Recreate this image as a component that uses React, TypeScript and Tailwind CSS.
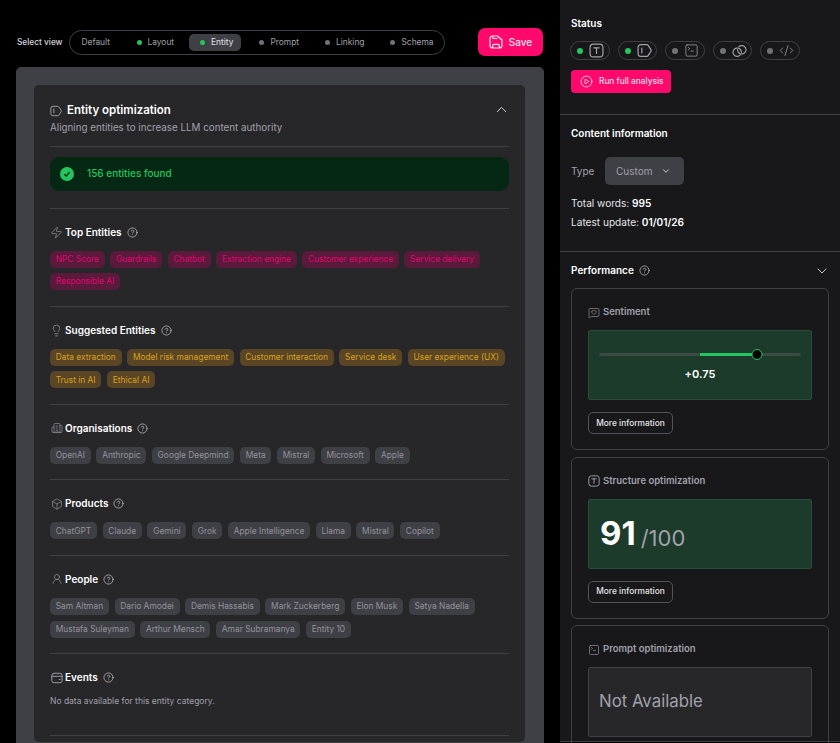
import {
  Box,
  Building2,
  ChevronDown,
  ChevronUp,
  CircleHelp,
  CirclePlay,
  CodeXml,
  Lightbulb,
  MessageSquareHeart,
  SquareTerminal,
  UserRound,
  Zap,
} from "lucide-react";
import type { ReactNode } from "react";

const tabs = [
  { label: "Layout", dot: "bg-[#22c55e]" },
  { label: "Entity", dot: "bg-[#22c55e]", active: true },
  { label: "Prompt", dot: "bg-[#71717a]" },
  { label: "Linking", dot: "bg-[#71717a]" },
  { label: "Schema", dot: "bg-[#71717a]" },
];

const groups = [
  {
    title: "Top Entities",
    icon: <Zap size={13} strokeWidth={1.2} />,
    tone: "bg-[#591a3b] text-[#e0056f]",
    tags: ["NPC Score", "Guardrails", "Chatbot", "Extraction engine", "Customer experience", "Service delivery", "Responsible AI"],
  },
  {
    title: "Suggested Entities",
    icon: <Lightbulb size={13} strokeWidth={1.2} />,
    tone: "bg-[#5a4525] text-[#d8a21c]",
    tags: ["Data extraction", "Model risk management", "Customer interaction", "Service desk", "User experience (UX)", "Trust in AI", "Ethical AI"],
  },
  {
    title: "Organisations",
    icon: <Building2 size={12} strokeWidth={1.2} />,
    tone: "bg-[#3f3f46] text-[#93939b]",
    tags: ["OpenAI", "Anthropic", "Google Deepmind", "Meta", "Mistral", "Microsoft", "Apple"],
  },
  {
    title: "Products",
    icon: <Box size={12} strokeWidth={1.2} />,
    tone: "bg-[#3f3f46] text-[#93939b]",
    tags: ["ChatGPT", "Claude", "Gemini", "Grok", "Apple Intelligence", "Llama", "Mistral", "Copilot"],
  },
  {
    title: "People",
    icon: <UserRound size={12} strokeWidth={1.2} />,
    tone: "bg-[#3f3f46] text-[#93939b]",
    tags: ["Sam Altman", "Dario Amodei", "Demis Hassabis", "Mark Zuckerberg", "Elon Musk", "Satya Nadella", "Mustafa Suleyman", "Arthur Mensch", "Amar Subramanya", "Entity 10"],
  },
];

function TypeIcon({ size = 15 }: { size?: number }) {
  return (
    <svg width={size} height={size} viewBox="0 0 14 14" fill="none" stroke="currentColor" strokeWidth="1.1">
      <rect x="1" y="1" width="12" height="12" rx="3" />
      <path d="M4.5 4.5h5M7 4.500v5.200" strokeLinecap="round" />
    </svg>
  );
}

function EntityIcon({ size = 15 }: { size?: number }) {
  return (
    <svg width={size} height={size} viewBox="0 0 14 14" fill="none" stroke="currentColor" strokeWidth="1.1">
      <path d="M3.5 1.500h5.700c.4 0 .8.200 1 .500l2.800 4.200c.3.500.3 1.100 0 1.600l-2.800 4.200c-.2.300-.6.500-1 .500H3.500A2.500 2.500 0 0 1 1 10V4a2.500 2.500 0 0 1 2.500-2.500Z" strokeLinejoin="round" />
      <path d="M4.500 4.700v4.600" strokeLinecap="round" />
    </svg>
  );
}

function LinkIcon() {
  return (
    <svg width="15" height="14" viewBox="0 0 15 14" fill="none" stroke="currentColor" strokeWidth="1.1">
      <path d="M6.79 2.87A4.2 4.2 0 1 1 5.61 5.49" strokeLinecap="round" />
      <path d="M8.21 11.13A4.2 4.2 0 1 1 9.39 8.51" strokeLinecap="round" />
    </svg>
  );
}

function SaveIcon() {
  return (
    <svg width="14" height="14" viewBox="0 0 14 14" fill="none" stroke="currentColor" strokeWidth="1.2">
      <path d="M3.500 1h5L13 5v5.500a2.500 2.500 0 0 1-2.500 2.500h-7A2.500 2.500 0 0 1 1 10.500v-7A2.500 2.500 0 0 1 3.500 1Z" strokeLinejoin="round" />
      <path d="M4 1.300v2.200h4.500M3.700 13v-2.200a1.500 1.500 0 0 1 1.500-1.500h3.600a1.500 1.500 0 0 1 1.500 1.500V13" strokeLinejoin="round" />
    </svg>
  );
}

function EventsIcon() {
  return (
    <svg width="12" height="12" viewBox="0 0 14 14" fill="none" stroke="currentColor" strokeWidth="1.1">
      <rect x="1" y="1.500" width="12" height="11" rx="2.500" />
      <path d="M1 5h12M9.500 8.800h1.200" strokeLinecap="round" />
    </svg>
  );
}

function Group({ title, icon, children, last }: { title: string; icon: ReactNode; children: ReactNode; last?: boolean }) {
  return (
    <section className={`border-t border-[#3f3f46] pt-[15.500px] ${last ? "h-[82px]" : "pb-[15.500px]"}`}>
      <div className="mb-[10.500px] flex h-4 items-center">
        <span className="mr-[2px] flex w-[13px] justify-center text-[#a1a1aa]">{icon}</span>
        <h3 className="text-[10px] font-semibold text-white">{title}</h3>
        <CircleHelp size={11} strokeWidth={1.3} className="ml-[5px] text-[#e4e4e7]" />
      </div>
      {children}
    </section>
  );
}

function MetricCard({ title, icon, children, more = true }: { title: string; icon: ReactNode; children: ReactNode; more?: boolean }) {
  return (
    <div className={`rounded-[6px] border border-[#3f3f46] px-4 pt-[15.500px] ${more ? "h-[162px]" : "h-[140px]"}`}>
      <div className="mb-[9.500px] flex h-4 items-center gap-[3px] text-[#a1a1aa]">
        {icon}
        <h4 className="text-[9.500px] font-semibold">{title}</h4>
      </div>
      {children}
      {more && (
        <button className="mt-[12px] h-[22px] w-[85px] rounded-[5px] border border-[#52525b] text-[8.400px] font-medium text-[#e4e4e7]">
          More information
        </button>
      )}
    </div>
  );
}

export default function App() {
  return (
    <div className="flex h-[743px] w-[840px] overflow-hidden bg-black font-[Inter,sans-serif]">
      <main className="flex h-full w-[560px] shrink-0 flex-col pl-4 pr-4">
        <div className="flex h-[67px] shrink-0 items-start pt-[28px]">
          <span className="mt-[8px] w-[52.500px] shrink-0 pl-[1px] text-[8.300px] font-medium text-[#d4d4d8]">Select view</span>
          <nav className="mt-[2px] flex h-[25px] w-[376px] items-center gap-[6.500px] rounded-full border border-[#3f3f46] pl-[2px]">
            <span className="w-[47px] shrink-0 pl-[10px] text-[8.400px] text-[#a1a1aa]">Default</span>
            {tabs.map((t) => (
              <span
                key={t.label}
                className={`flex h-[17.500px] shrink-0 items-center gap-[6px] rounded-[5px] pl-[11.500px] pr-2 text-[8.400px] ${t.active ? "bg-[#3f3f46] text-[#e4e4e7]" : "text-[#a1a1aa]"}`}
              >
                <i className={`h-[5px] w-[5px] rounded-full ${t.dot}`} />
                {t.label}
              </span>
            ))}
          </nav>
          <button className="ml-[33.500px] flex h-[28px] w-[65px] items-center justify-center gap-[6px] rounded-[7px] bg-[#ff0a6c] text-[10px] font-medium text-[#ffe4ee]">
            <SaveIcon />
            Save
          </button>
        </div>

        <div className="flex-1 rounded-t-[5px] bg-[#3f3f46] pl-[18px] pr-[19px] pt-[18px]">
          <div className="h-[657px] rounded-[5px] bg-[#27272a] px-4">
            <header className="flex h-[60.500px] items-start justify-between pt-4">
              <div>
                <div className="flex h-[18px] items-center gap-[5px] pt-[1px]">
                  <span className="text-[#a1a1aa]">
                    <EntityIcon size={12} />
                  </span>
                  <h2 className="text-[11.500px] font-semibold text-white">Entity optimization</h2>
                </div>
                <p className="mt-[2px] text-[9.800px] text-[#a1a1aa]">Aligning entities to increase LLM content authority</p>
              </div>
              <ChevronUp size={17} strokeWidth={1.3} className="mr-[-1px] mt-0 text-[#e4e4e7]" />
            </header>

            <div className="border-t border-[#3f3f46] pb-[17px] pt-[10px]">
              <div className="flex h-[34px] items-center gap-[13px] rounded-[9px] bg-[#052814] pl-[10px]">
                <span className="flex h-[14px] w-[14px] items-center justify-center rounded-full bg-[#22c55e]">
                  <svg width="8" height="8" viewBox="0 0 8 8" fill="none" stroke="#052814" strokeWidth="1.300">
                    <path d="M1.300 4.200 3.200 6l3.500-4" />
                  </svg>
                </span>
                <span className="text-[10px] font-medium text-[#22c55e]">156 entities found</span>
              </div>
            </div>

            {groups.map((g) => (
              <Group key={g.title} title={g.title} icon={g.icon}>
                <ul className="flex flex-wrap gap-[5.700px]">
                  {g.tags.map((tag) => (
                    <li key={tag} className={`flex h-[17px] items-center rounded-[5px] px-[5.700px] text-[8.400px] ${g.tone}`}>
                      {tag}
                    </li>
                  ))}
                </ul>
              </Group>
            ))}

            <Group title="Events" icon={<EventsIcon />} last>
              <p className="mt-[-1px] text-[8.500px] text-[#a1a1aa]">No data available for this entity category.</p>
            </Group>
            <div className="border-t border-[#3f3f46]" />
          </div>
        </div>
      </main>

      <aside className="h-[742px] w-[280px] shrink-0 border-b border-[#3f3f46] bg-[#18181b] text-[#e4e4e7]">
        <section className="h-[115px] border-b border-[#3f3f46] px-[11px] pt-[17px]">
          <h3 className="text-[10px] font-semibold leading-3 text-white">Status</h3>
          <div className="ml-[-1px] mt-[12px] flex gap-[8px]">
            {[
              { dot: "bg-[#22c55e]", icon: <TypeIcon /> },
              { dot: "bg-[#22c55e]", icon: <EntityIcon /> },
              { dot: "bg-[#71717a]", icon: <SquareTerminal size={15} strokeWidth={1.2} /> },
              { dot: "bg-[#71717a]", icon: <LinkIcon /> },
              { dot: "bg-[#71717a]", icon: <CodeXml size={15} strokeWidth={1.2} /> },
            ].map((s, i) => (
              <span key={i} className="flex h-[19px] w-[39.500px] items-center gap-[6px] rounded-full border border-[#3f3f46] pl-[6px] text-[#a1a1aa]">
                <i className={`h-[6px] w-[6px] shrink-0 rounded-full ${s.dot}`} />
                {s.icon}
              </span>
            ))}
          </div>
          <button className="mt-[10px] flex h-[22.500px] w-[100px] items-center gap-[6px] rounded-[4px] bg-[#ff0a6c] pl-[9px] text-[8.300px] font-medium text-[#ffd9e8]">
            <CirclePlay size={13} strokeWidth={1.3} className="text-white" />
            Run full analysis
          </button>
        </section>

        <section className="h-[137px] border-b border-[#3f3f46] px-[11px] pt-[12px]">
          <h3 className="text-[10px] font-semibold leading-3 text-white">Content information</h3>
          <div className="mt-[18px] flex items-center">
            <span className="w-[34px] text-[10px] text-[#a1a1aa]">Type</span>
            <span className="flex h-[28px] w-[79px] items-center rounded-[5px] bg-[#3f3f46] pl-[11px] text-[10px] text-[#a1a1aa]">
              Custom
              <ChevronDown size={10} strokeWidth={2} className="ml-[9px] text-[#e4e4e7]" />
            </span>
          </div>
          <p className="mt-[11px] text-[10.100px] leading-[14px]">
            Total words: <b className="font-semibold text-white">995</b>
          </p>
          <p className="mt-[5px] text-[10.100px] leading-[14px]">
            Latest update: <b className="font-semibold text-white">01/01/26</b>
          </p>
        </section>

        <section className="px-[11px] pt-[12px]">
          <div className="flex h-[13px] items-center">
            <h3 className="text-[10px] font-semibold text-white">Performance</h3>
            <CircleHelp size={11} strokeWidth={1.3} className="ml-[5px]" />
            <ChevronDown size={16} strokeWidth={1.3} className="ml-auto mr-[-1px]" />
          </div>
          <div className="mt-[11px] flex flex-col gap-[6.500px]">
            <MetricCard title="Sentiment" icon={<MessageSquareHeart size={12} strokeWidth={1.2} />}>
              <div className="h-[70px] rounded-[2px] border border-[#2b4a3a] bg-[#1c3b2b] px-[10px] pt-[22px]">
                <div className="relative h-[3px] rounded-full bg-[#3d4a44]">
                  <div className="absolute left-[50%] h-[3px] w-[28.200%] bg-[#22c55e]" />
                  <div className="absolute left-[78.200%] top-[-4px] h-[11px] w-[11px] -translate-x-1/2 rounded-full border-[1.500px] border-[#22c55e] bg-black" />
                </div>
                <p className="mt-[10px] text-center text-[11px] font-semibold text-white">+0.75</p>
              </div>
            </MetricCard>
            <MetricCard title="Structure optimization" icon={<TypeIcon size={12} />}>
              <div className="flex h-[70px] items-center rounded-[2px] border border-[#2b4a3a] bg-[#1c3b2b] pl-[11px]">
                <span className="text-[33px] font-bold leading-none text-white">91</span>
                <span className="ml-[5px] mt-[8px] text-[22px] leading-none text-[#a1a1aa]">/100</span>
              </div>
            </MetricCard>
            <MetricCard title="Prompt optimization" icon={<SquareTerminal size={12} strokeWidth={1.2} />} more={false}>
              <div className="flex h-[70px] items-center rounded-[2px] border border-[#3f3f46] bg-[#27272a] pl-[10px] text-[16.800px] text-[#a1a1aa]">
                Not Available
              </div>
            </MetricCard>
          </div>
        </section>
      </aside>
    </div>
  );
}
